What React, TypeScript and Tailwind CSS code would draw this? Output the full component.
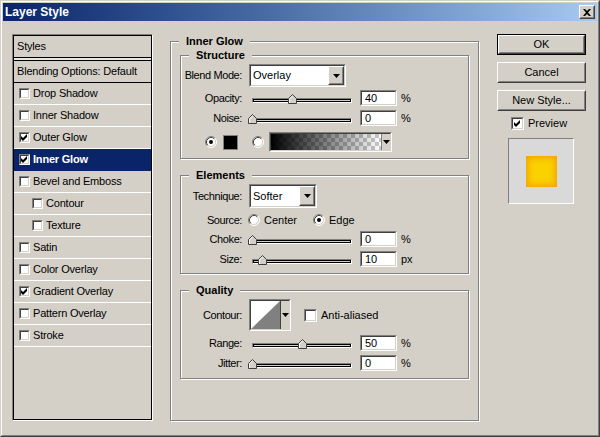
import React from 'react';

type Kids = { className?: string; inner?: string; children?: React.ReactNode };

// classic 3D frames
function Sunken({ className = '', inner = '', children }: Kids) {
  return (
    <div className={`border border-t-[#808080] border-l-[#808080] border-b-white border-r-white ${className}`}>
      <div className={`h-full w-full border border-t-[#404040] border-l-[#404040] border-b-[#d4d0c8] border-r-[#d4d0c8] ${inner}`}>
        {children}
      </div>
    </div>
  );
}

function Raised({ className = '', inner = '', children }: Kids) {
  return (
    <div className={`border border-t-white border-l-white border-b-[#404040] border-r-[#404040] ${className}`}>
      <div className={`h-full w-full border border-t-[#d4d0c8] border-l-[#d4d0c8] border-b-[#808080] border-r-[#808080] ${inner}`}>
        {children}
      </div>
    </div>
  );
}

function Check({ checked = false, big = false }: { checked?: boolean; big?: boolean }) {
  return (
    <Sunken className={big ? 'h-[13px] w-[13px] shrink-0' : 'h-[11px] w-[11px] shrink-0'} inner="bg-white">
      {checked &&
        (big ? (
          <svg width="9" height="9" viewBox="0 0 9 9" className="block">
            <polygon points="1,3 3,5 7,1 7,4 3,8 1,6" fill="black" />
          </svg>
        ) : (
          <svg width="7" height="7" viewBox="0 0 7 7" className="block">
            <polygon points="0,2 2,4 6,0 6,3 2,7 0,5" fill="black" />
          </svg>
        ))}
    </Sunken>
  );
}

function Radio({ on = false }: { on?: boolean }) {
  return (
    <svg width="12" height="12" viewBox="0 0 12 12" className="block shrink-0">
      <circle cx="6" cy="6" r="5" fill="white" />
      <path d="M2.11 9.89A5.5 5.5 0 0 1 9.89 2.11" stroke="#808080" fill="none" />
      <path d="M9.89 2.11A5.5 5.5 0 0 1 2.11 9.89" stroke="white" fill="none" />
      <path d="M2.82 9.18A4.5 4.5 0 0 1 9.18 2.82" stroke="#404040" fill="none" />
      <path d="M9.18 2.82A4.5 4.5 0 0 1 2.82 9.18" stroke="#d4d0c8" fill="none" />
      {on && <circle cx="6" cy="6" r="2" fill="black" />}
    </svg>
  );
}

function Arrow() {
  return (
    <svg width="7" height="4" viewBox="0 0 7 4" className="block">
      <polygon points="0,0 7,0 3.5,4" fill="black" />
    </svg>
  );
}

function Select({ value, className }: { value: string; className: string }) {
  return (
    <Sunken className={className} inner="flex bg-white">
      <span className="flex flex-1 items-center pl-[2px]">{value}</span>
      <Raised className="h-full w-[16px]" inner="flex items-center justify-center bg-[#d4d0c8]">
        <Arrow />
      </Raised>
    </Sunken>
  );
}

function Field({ value }: { value: string }) {
  return (
    <Sunken className="ml-[8px] h-[16px] w-[37px]" inner="flex items-center bg-white pl-[3px]">
      {value}
    </Sunken>
  );
}

function Slider({ value }: { value: number }) {
  return (
    <div className="relative ml-[10px] h-[16px] w-[100px]">
      <div className="mt-[8px] h-[5px] border border-t-[#808080] border-l-[#808080] border-b-white border-r-white">
        <div className="h-full border border-black bg-[#d4d0c8]" />
      </div>
      <svg width="9" height="10" viewBox="0 0 9 10" className="absolute top-[4px]" style={{ left: value - 4 }}>
        <polygon points="4.5,0.5 8.5,4.5 8.5,9.5 0.5,9.5 0.5,4.5" fill="#d4d0c8" stroke="#404040" />
        <polyline points="1.5,9 1.5,4.9 4.5,1.9" fill="none" stroke="white" />
      </svg>
    </div>
  );
}

function Label({ children }: { children: React.ReactNode }) {
  return <span className="flex w-[61px] shrink-0 justify-end whitespace-nowrap tracking-[-0.4px]">{children}</span>;
}

function SliderRow({ label, value, unit, className = '' }: { label: string; value: number; unit: string; className?: string }) {
  return (
    <div className={`flex h-[16px] items-center ${className}`}>
      <Label>{label}</Label>
      <Slider value={value} />
      <Field value={String(value)} />
      <span className="ml-[4px]">{unit}</span>
    </div>
  );
}

function Group({ title, className, children }: { title: string; className: string; children: React.ReactNode }) {
  return (
    <div className={`relative border border-[#808080] shadow-[1px_1px_0_#fff,inset_1px_1px_0_#fff] ${className}`}>
      <span className="absolute -top-[7px] left-[8px] bg-[#d4d0c8] px-[7px] font-bold">{title}</span>
      {children}
    </div>
  );
}

function GradientSwatch() {
  return (
    <svg width="110" height="16" viewBox="0 0 110 16" className="block">
      <defs>
        <pattern id="chk" width="8" height="8" patternUnits="userSpaceOnUse">
          <rect width="8" height="8" fill="white" />
          <rect width="4" height="4" fill="#c8c8c8" />
          <rect x="4" y="4" width="4" height="4" fill="#c8c8c8" />
        </pattern>
        <linearGradient id="fade" x1="0" x2="1" y1="0" y2="0">
          <stop offset="0" stopColor="black" stopOpacity="1" />
          <stop offset="1" stopColor="black" stopOpacity="0" />
        </linearGradient>
      </defs>
      <rect width="110" height="16" fill="url(#chk)" />
      <rect width="110" height="16" fill="url(#fade)" />
    </svg>
  );
}

const styles: { name: string; checked?: boolean; indent?: boolean; selected?: boolean }[] = [
  { name: 'Drop Shadow' },
  { name: 'Inner Shadow' },
  { name: 'Outer Glow', checked: true },
  { name: 'Inner Glow', checked: true, selected: true },
  { name: 'Bevel and Emboss' },
  { name: 'Contour', indent: true },
  { name: 'Texture', indent: true },
  { name: 'Satin' },
  { name: 'Color Overlay' },
  { name: 'Gradient Overlay', checked: true },
  { name: 'Pattern Overlay' },
  { name: 'Stroke' },
];

export default function App() {
  return (
    <div className="h-[437px] w-[600px] border border-t-[#d4d0c8] border-l-[#d4d0c8] border-b-[#404040] border-r-[#404040] font-['Liberation_Sans',Arial,sans-serif] text-[11px] leading-[13px] text-black">
      <div className="flex h-full flex-col border border-t-white border-l-white border-b-[#808080] border-r-[#808080] bg-[#d4d0c8] p-[1px]">
        {/* title bar */}
        <div className="flex h-[18px] shrink-0 items-center bg-linear-to-r from-[#0a246a] to-[#a6caf0] pl-[2px] pr-[2px]">
          <span className="flex-1 text-[12px] font-bold text-white">Layer Style</span>
          <Raised className="h-[14px] w-[16px]" inner="flex items-center justify-center bg-[#d4d0c8]">
            <svg width="8" height="7" viewBox="0 0 8 7" className="block">
              <path d="M0 0h2l2 2 2-2h2L5 3.5 8 7H6L4 5 2 7H0l3-3.5z" fill="black" />
            </svg>
          </Raised>
        </div>

        <div className="flex items-start">
          {/* styles list */}
          <div className="ml-[9px] mt-[13px] h-[387px] w-[141px] border border-t-[#808080] border-l-[#808080] border-b-white border-r-white tracking-[-0.2px]">
            <div className="flex h-full flex-col border border-black">
              <div className="flex h-[22px] items-center border-b border-black pl-[3px]">Styles</div>
              <div className="h-[2px] bg-[#e8e6e0]" />
              <div className="flex h-[23px] items-center border-y border-black pl-[3px]">Blending Options: Default</div>
              {styles.map((s) => (
                <div
                  key={s.name}
                  className={`flex h-[22px] items-center border-b ${
                    s.selected ? 'border-[#0a246a] bg-[#0a246a] font-bold text-white' : 'border-white'
                  } ${s.indent ? 'pl-[18px]' : 'pl-[5px]'}`}
                >
                  <Check checked={s.checked} />
                  <span className="ml-[3px]">{s.name}</span>
                </div>
              ))}
            </div>
          </div>

          {/* settings */}
          <div className="relative ml-[17px] mt-[20px] h-[380px] w-[309px] border border-[#808080] pl-[9px] pt-[13px] shadow-[1px_1px_0_#fff,inset_1px_1px_0_#fff]">
            <span className="absolute -top-[7px] left-[8px] bg-[#d4d0c8] px-[7px] font-bold">Inner Glow</span>

            <Group title="Structure" className="h-[104px] w-[289px] pt-[8px]">
              <div className="flex items-center">
                <Label>Blend Mode:</Label>
                <Select value="Overlay" className="ml-[7px] h-[23px] w-[97px]" />
              </div>
              <SliderRow label="Opacity:" value={40} unit="%" className="mt-[3px]" />
              <SliderRow label="Noise:" value={0} unit="%" className="mt-[4px]" />
              <div className="mt-[6px] flex h-[20px] items-center pl-[24px]">
                <Radio on />
                <div className="ml-[6px] h-[15px] w-[15px] border border-[#808080] bg-black" />
                <div className="ml-[14px]">
                  <Radio />
                </div>
                <Sunken className="ml-[5px] h-[20px] w-[123px]" inner="flex bg-white">
                  <GradientSwatch />
                  <div className="flex flex-1 items-center justify-center border-l border-[#808080] bg-[#d4d0c8]">
                    <Arrow />
                  </div>
                </Sunken>
              </div>
            </Group>

            <Group title="Elements" className="mt-[16px] h-[99px] w-[289px] pt-[8px]">
              <div className="flex items-center">
                <Label>Technique:</Label>
                <Select value="Softer" className="ml-[7px] h-[24px] w-[68px]" />
              </div>
              <div className="mt-[4px] flex h-[16px] items-center">
                <Label>Source:</Label>
                <div className="ml-[6px]">
                  <Radio />
                </div>
                <span className="ml-[4px]">Center</span>
                <div className="ml-[16px]">
                  <Radio on />
                </div>
                <span className="ml-[4px]">Edge</span>
              </div>
              <SliderRow label="Choke:" value={0} unit="%" className="mt-[3px]" />
              <SliderRow label="Size:" value={10} unit="px" className="mt-[4px]" />
            </Group>

            <Group title="Quality" className="mt-[16px] h-[89px] w-[289px] pt-[8px]">
              <div className="flex h-[32px] items-center">
                <Label>Contour:</Label>
                <Sunken className="ml-[7px] h-[32px] w-[42px]" inner="flex bg-white">
                  <svg width="29" height="28" viewBox="0 0 29 28" className="block">
                    <polygon points="0,28 29,0 29,28" fill="#808080" />
                  </svg>
                  <div className="flex flex-1 items-center justify-center border-l border-[#404040] bg-[#d4d0c8]">
                    <Arrow />
                  </div>
                </Sunken>
                <div className="ml-[13px]">
                  <Check big />
                </div>
                <span className="ml-[4px]">Anti-aliased</span>
              </div>
              <SliderRow label="Range:" value={50} unit="%" className="mt-[4px]" />
              <SliderRow label="Jitter:" value={0} unit="%" className="mt-[4px]" />
            </Group>
          </div>

          {/* buttons */}
          <div className="ml-[18px] mt-[13px] flex w-[89px] flex-col">
            <div className="h-[21px] border border-black">
              <Raised className="h-full" inner="flex items-center justify-center">OK</Raised>
            </div>
            <Raised className="mt-[7px] h-[21px]" inner="flex items-center justify-center">Cancel</Raised>
            <Raised className="mt-[7px] h-[21px]" inner="flex items-center justify-center">New Style...</Raised>
            <div className="mt-[6px] flex h-[13px] items-center pl-[14px]">
              <Check checked big />
              <span className="ml-[4px]">Preview</span>
            </div>
            <div className="ml-[11px] mt-[8px] flex h-[66px] w-[66px] items-center justify-center border border-t-[#808080] border-l-[#808080] border-b-white border-r-white bg-[#d9d9d9]">
              <div className="h-[31px] w-[31px] bg-[#f9d200] shadow-[inset_0_0_6px_2px_#f2a200]" />
            </div>
          </div>
        </div>
      </div>
    </div>
  );
}
